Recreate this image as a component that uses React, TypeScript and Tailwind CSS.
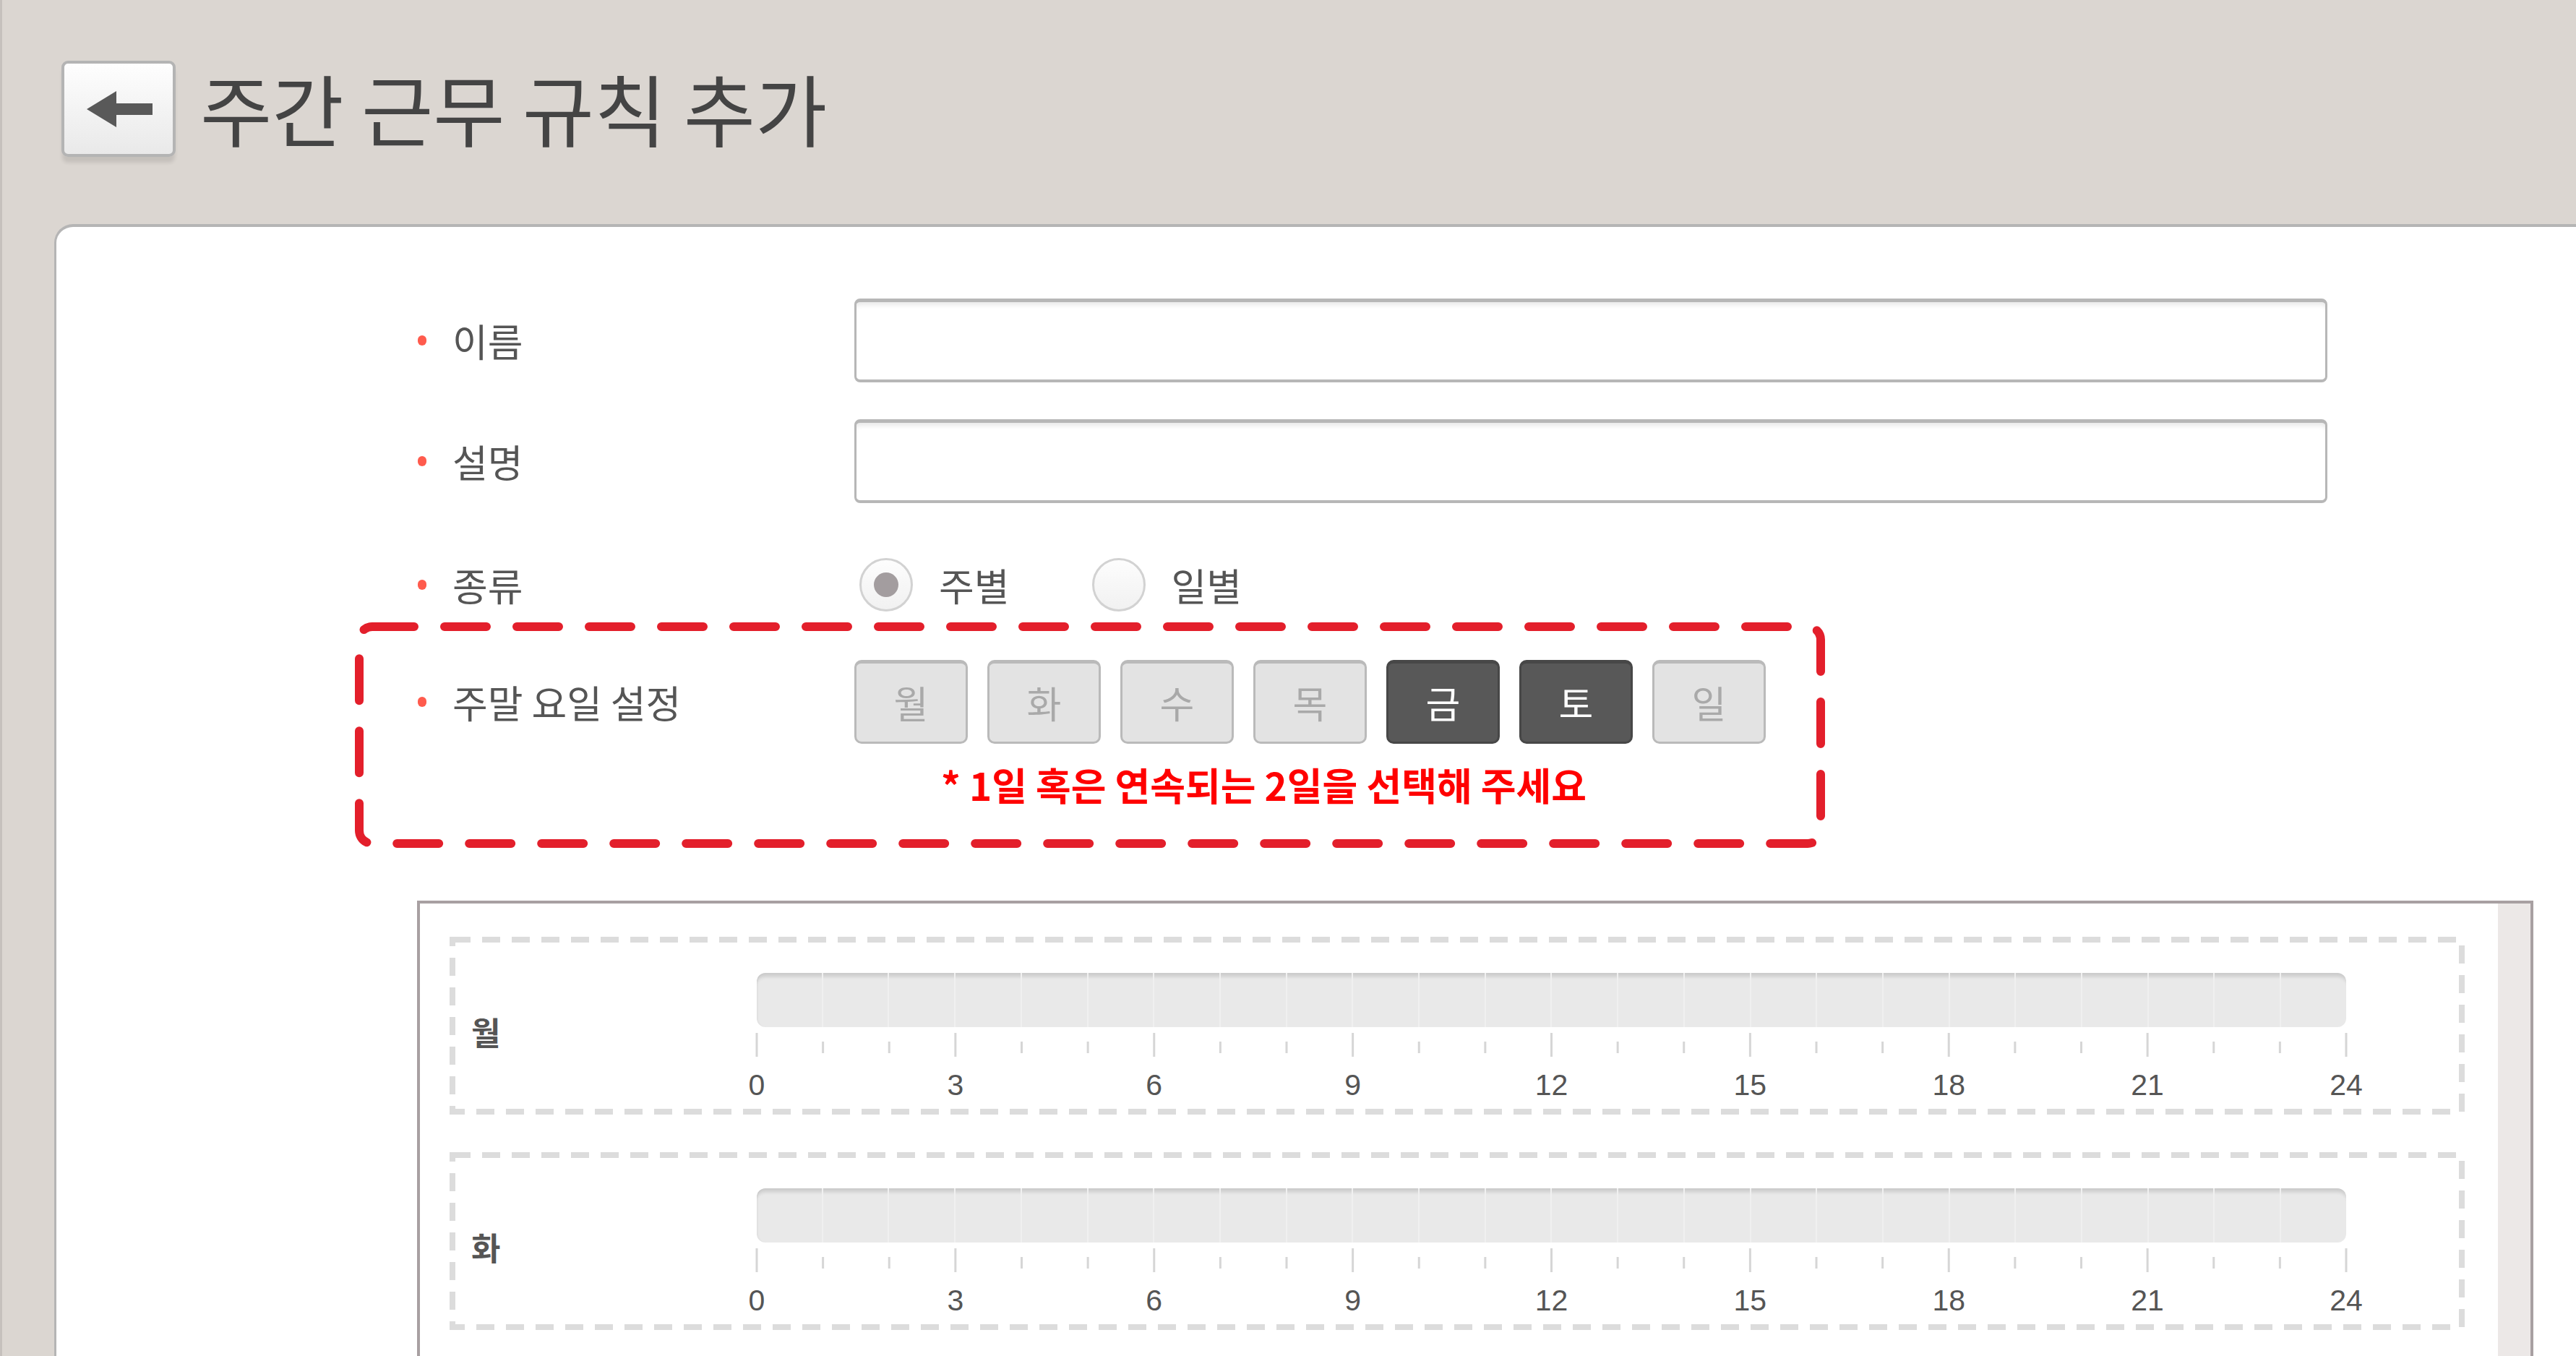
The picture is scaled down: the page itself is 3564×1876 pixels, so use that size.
import React from "react";

const DAYS = ["월", "화", "수", "목", "금", "토", "일"];
const WEEKEND = ["금", "토"];
const TIMELINE_W = 2199;
const BLOCK_W = 2788;
const BLOCK_H = 246;

function Dot() {
  return <span className="block h-[14px] w-[12px] rounded-full bg-[#ff5b4d]" />;
}

function Label({ text }: { text: string }) {
  return (
    <div className="flex w-[605px] shrink-0 items-center pl-[1px]">
      <Dot />
      <span className="ml-[36px] text-[53px] leading-none text-[#555555]">{text}</span>
    </div>
  );
}

function TextInput() {
  return (
    <div className="h-[116px] w-[2038px] rounded-[8px] border-[3px] border-t-[5px] border-b-[4px] border-[#b7b7b7] bg-white shadow-[inset_0_7px_6px_-3px_rgba(0,0,0,0.09)]" />
  );
}

function Radio({ checked, label }: { checked: boolean; label: string }) {
  return (
    <div className="flex items-center">
      <div className="flex h-[74px] w-[74px] items-center justify-center rounded-full border-[3px] border-[#d2d2d2] bg-gradient-to-b from-[#fdfdfd] to-[#f1f1f1]">
        {checked && <div className="h-[34px] w-[34px] rounded-full bg-[#a39d9f]" />}
      </div>
      <span className="ml-[36px] text-[53px] leading-none text-[#555555]">{label}</span>
    </div>
  );
}

function Timeline() {
  const hours = Array.from({ length: 25 }, (_, i) => i);
  const labels = [0, 3, 6, 9, 12, 15, 18, 21, 24];
  return (
    <div className="w-[2199px] shrink-0">
      <div className="flex h-[75px] overflow-hidden rounded-[12px] bg-[#e9e9e9] shadow-[inset_0_9px_5px_-4px_rgba(0,0,0,0.13),inset_3px_0_3px_-2px_rgba(0,0,0,0.06)]">
        {Array.from({ length: 24 }).map((_, i) => (
          <div key={i} className={i < 23 ? "flex-1 border-r-2 border-[#f0f0f0]" : "flex-1"} />
        ))}
      </div>
      <svg width={TIMELINE_W} height={33} className="mt-[8px] block overflow-visible">
        {hours.map((h) => {
          const x = (h * TIMELINE_W) / 24;
          const major = h % 3 === 0;
          return (
            <rect key={h} x={x - 1.5} y={major ? 0 : 12} width={3} height={major ? 33 : 16} fill="#d6d6d6" />
          );
        })}
      </svg>
      <div className="relative mt-[19px] h-[40px] font-['Liberation_Sans',Arial,sans-serif] text-[41px] leading-[40px] text-[#555555]">
        {labels.map((h) => (
          <span key={h} className="absolute top-0 -translate-x-1/2" style={{ left: `${(h / 24) * 100}%` }}>
            {h}
          </span>
        ))}
      </div>
    </div>
  );
}

function DayBlock({ day }: { day: string }) {
  return (
    <div className="relative flex h-[246px] w-[2788px] pb-[21px] pl-[30px] pt-[50px]">
      <svg
        className="pointer-events-none absolute left-0 top-0"
        width={BLOCK_W}
        height={BLOCK_H}
        viewBox={`0 0 ${BLOCK_W} ${BLOCK_H}`}
      >
        <rect
          x="4"
          y="4"
          width={BLOCK_W - 8}
          height={BLOCK_H - 8}
          fill="none"
          stroke="#dcdcdc"
          strokeWidth="8"
          strokeDasharray="25 16"
        />
      </svg>
      <div className="flex w-[395px] shrink-0 items-center pb-[14px]">
        <span className="text-[44px] font-bold leading-none text-[#555555]">{day}</span>
      </div>
      <Timeline />
    </div>
  );
}

export default function App() {
  return (
    <div className="h-[1876px] w-[3564px] overflow-hidden border-l-[3px] border-[#c6c1bd] bg-[#dbd6d1] font-['Noto_Sans_CJK_KR','Noto_Sans',sans-serif]">
      <header className="flex h-[310px] items-start pl-[82px] pt-[84px]">
        <div className="flex h-[133px] w-[158px] items-center justify-center rounded-[9px] border-4 border-[#b4b4b4] bg-gradient-to-b from-[#fefefe] to-[#e9e9e9] shadow-[0_9px_5px_-1px_rgba(0,0,0,0.1)]">
          <svg width="91" height="50" viewBox="0 0 91 50" className="ml-[2px]">
            <path d="M0 25 L41 0 L41 17 L91 17 L91 33 L41 33 L41 50 Z" fill="#595959" />
          </svg>
        </div>
        <h1 className="ml-[34px] mt-[10px] text-[108px] font-normal leading-none text-[#444444]">주간 근무 규칙 추가</h1>
      </header>

      <main className="ml-[72px] h-full rounded-tl-[26px] border-l-[3px] border-t-4 border-[#b5b5b5] bg-white pl-[499px] pt-[99px]">
        <div className="flex h-[116px] items-center">
          <Label text="이름" />
          <TextInput />
        </div>
        <div className="mt-[51px] flex h-[116px] items-center">
          <Label text="설명" />
          <TextInput />
        </div>
        <div className="mt-[55px] flex h-[116px] items-center">
          <Label text="종류" />
          <div className="ml-[7px] flex items-center gap-[114px]">
            <Radio checked label="주별" />
            <Radio checked={false} label="일별" />
          </div>
        </div>

        <div className="relative mt-[46px]">
          <svg
            className="pointer-events-none absolute left-[-86px] top-[-52px]"
            width="2034"
            height="312"
            viewBox="0 0 2034 312"
          >
            <rect
              x="6"
              y="6"
              width="2022"
              height="300"
              rx="18"
              fill="none"
              stroke="#e31f2b"
              strokeWidth="12"
              strokeDasharray="58 42"
              strokeLinecap="round"
            />
          </svg>
          <div className="flex items-center">
            <Label text="주말 요일 설정" />
            <div className="flex gap-[27px]">
              {DAYS.map((d) => {
                const on = WEEKEND.includes(d);
                return (
                  <div
                    key={d}
                    className={
                      on
                        ? "flex h-[116px] w-[157px] items-center justify-center rounded-[10px] border-[3px] border-t-[5px] border-[#474747] bg-[#585858] text-[52px] leading-none text-white"
                        : "flex h-[116px] w-[157px] items-center justify-center rounded-[10px] border-[3px] border-t-[5px] border-[#bababa] bg-[#e3e3e3] text-[52px] leading-none text-[#a9a9a9]"
                    }
                  >
                    {d}
                  </div>
                );
              })}
            </div>
          </div>
          <p className="ml-[725px] mt-[25px] text-[53px] font-bold leading-[62px] text-[#ff0000]">
            * 1일 혹은 연속되는 2일을 선택해 주세요
          </p>
        </div>

        <div className="mt-[130px] flex w-[2928px] border-4 border-b-0 border-[#a8a0a2]">
          <div className="flex flex-1 flex-col gap-[52px] pb-[41px] pl-[41px] pt-[46px]">
            {DAYS.map((d) => (
              <DayBlock key={d} day={d} />
            ))}
          </div>
          <div className="w-[45px] shrink-0 bg-[#ece8e7]" />
        </div>
      </main>
    </div>
  );
}
